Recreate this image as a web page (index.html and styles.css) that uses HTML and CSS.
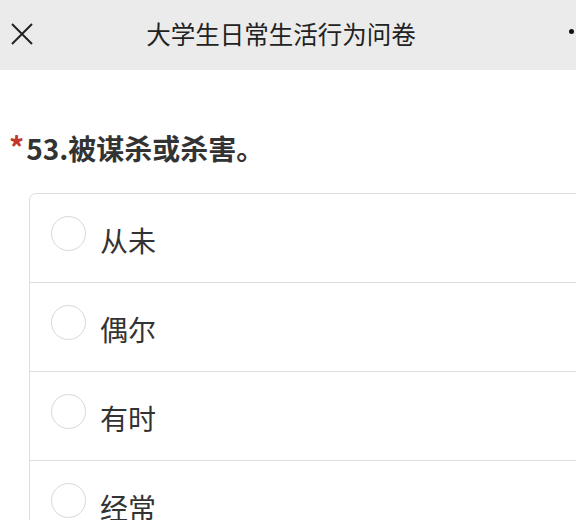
FILE: index.html
```html
<!DOCTYPE html>
<html lang="zh-CN">
<head>
    <meta charset="UTF-8">
    <meta name="viewport" content="width=device-width, initial-scale=1.0">
    <title>大学生日常生活行为问卷</title>
    <link rel="stylesheet" href="styles.css">
</head>
<body>
    <!-- Top bar -->
    <div class="topbar">
        <span class="close">
            <svg width="24" height="24" viewBox="0 0 24 24">
                <path d="M2 2 L22 22 M22 2 L2 22" stroke="#222" stroke-width="2" fill="none"/>
            </svg>
        </span>
        <div class="title">大学生日常生活行为问卷</div>
        <div class="more"><span class="dot"></span></div>
    </div>

    <!-- Question -->
    <div class="question">
        <div class="question-title"><span class="req">*</span>53.被谋杀或杀害。</div>
        <div class="options">
            <label class="option"><span class="radio"></span><span class="option-text">从未</span></label>
            <label class="option"><span class="radio"></span><span class="option-text">偶尔</span></label>
            <label class="option"><span class="radio"></span><span class="option-text">有时</span></label>
            <label class="option"><span class="radio"></span><span class="option-text">经常</span></label>
        </div>
    </div>
</body>
</html>
```

FILE: styles.css
```css
html, body {
    margin: 0;
    padding: 0;
    overflow: hidden;
}
body {
    font-family: "Noto Sans CJK SC", "Noto Sans", sans-serif;
    background-color: #fff;
    color: #333;
    width: 576px;
    height: 520px;
}
.topbar {
    display: flex;
    align-items: center;
    height: 70px;
    padding-left: 10px;
    background-color: #ebebeb;
}
.close {
    display: flex;
    width: 24px;
    height: 24px;
    margin-top: -2px;
}
.title {
    width: 494px;
    text-align: center;
    font-size: 24.5px;
    line-height: 36px;
    color: #222;
    margin-top: -3px;
}
.more {
    flex: 1;
    display: flex;
    justify-content: flex-end;
    padding-right: 2px;
}
.dot {
    width: 5px;
    height: 5px;
    border-radius: 50%;
    background-color: #111;
    margin-top: -6px;
}
.question {
    padding: 60px 0 0 9px;
}
.question-title {
    font-size: 28px;
    line-height: 36px;
    height: 36px;
    font-weight: bold;
    color: #333;
}
.req {
    color: #c0392b;
    font-size: 30px;
    line-height: 0;
    margin-right: 2px;
    vertical-align: 1px;
}
.options {
    margin: 27px 0 0 20px;
    width: 600px;
    border: 1.5px solid #dedede;
    border-radius: 7px;
}
.option {
    display: flex;
    align-items: center;
    height: 88px;
    padding-left: 21px;
    border-top: 1.5px solid #dedede;
}
.option:first-child {
    border-top: none;
}
.radio {
    width: 33px;
    height: 33px;
    border: 1.5px solid #d8d8d8;
    border-radius: 50%;
    margin-top: -10px;
}
.option-text {
    margin-left: 14px;
    font-size: 28px;
    color: #333;
    margin-top: 4px;
}
```
